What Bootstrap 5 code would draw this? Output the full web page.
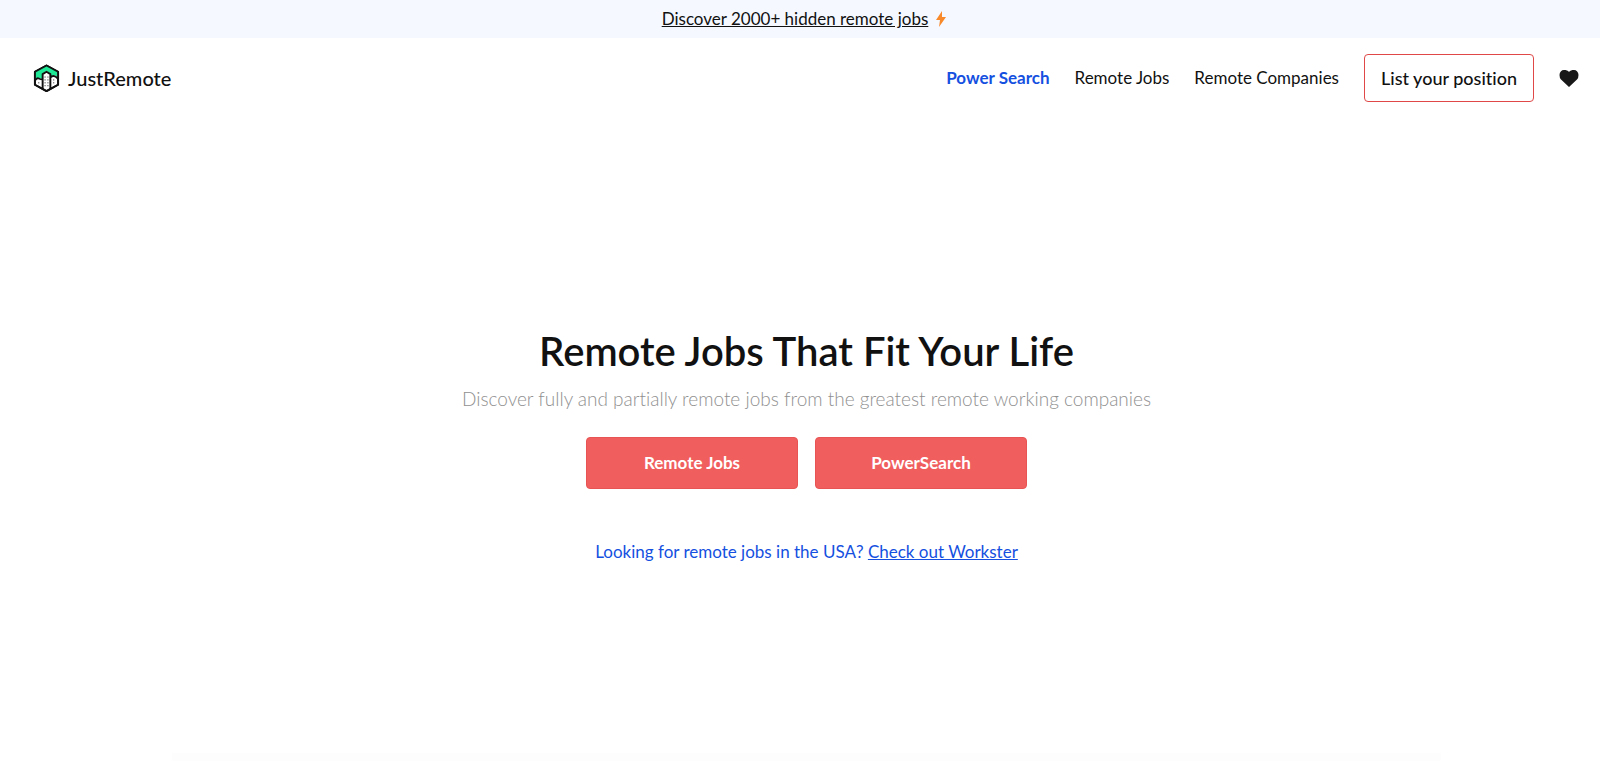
<!DOCTYPE html>
<html lang="en">
<head>
<meta charset="utf-8">
<meta name="viewport" content="width=device-width, initial-scale=1">
<title>JustRemote</title>
<link href="https://cdn.jsdelivr.net/npm/bootstrap@5.3.0/dist/css/bootstrap.min.css" rel="stylesheet">
<style>
  body { font-family: Lato, "Open Sans", sans-serif; font-size: 17px; line-height: 24px; color: #111; background: #fff; font-variant-ligatures: none; }
  .promo { background: #f5f8ff; height: 38px; padding-left: 8px; }
  .promo a, .site-nav a { color: #111; }
  .site-header { padding: 16px 21px 16px 33px; }
  .brand { font-size: 20px; font-weight: 500; color: #111; }
  .site-nav { gap: 25px; }
  .site-nav .power { color: #1550e0; font-weight: 700; }
  .btn-list { --bs-btn-color: #111; --bs-btn-border-color: #e04848; --bs-btn-hover-bg: #f15e5e; --bs-btn-hover-color: #fff; border-radius: 4px; font-size: 18px; font-weight: 500; line-height: 24px; padding: 11px 16px; font-variant-ligatures: none; }
  .hero { padding: 17px 0 0 13px; }
  .hero h1 { font-size: 40px; line-height: 52px; font-weight: 600; }
  .tagline { font-size: 19px; line-height: 28px; font-weight: 300; color: #909090; }
  .cta-row { gap: 17px; }
  .btn-cta { --bs-btn-color: #fff; --bs-btn-bg: #f15e5e; --bs-btn-border-color: #e85454; --bs-btn-hover-color: #fff; --bs-btn-hover-bg: #e04848; width: 212px; height: 52px; border-radius: 4px; font-size: 17px; font-weight: 700; line-height: 38px; }
  .usa { color: #1550e0; margin-top: 51px; }
  .usa a { color: #1550e0; }
  .next-section { padding-left: 13px; }
  .next-panel { width: 80%; height: 8px; background: #fdfdfd; }
</style>
</head>
<body class="d-flex flex-column min-vh-100">
<div class="promo d-flex justify-content-center align-items-center gap-2">
  <a href="#">Discover 2000+ hidden remote jobs</a>
  <svg width="10" height="16" viewBox="0 0 10 16" fill="#f98a2b" aria-hidden="true"><path d="M6 0 0 9h4L3 16l7-10H6z"/></svg>
</div>
<header class="site-header d-flex flex-wrap align-items-center justify-content-between">
  <a class="brand d-flex align-items-center gap-2 text-decoration-none" href="#">
    <svg width="27" height="29" viewBox="0 0 28 30" fill="none" stroke="#111" stroke-width="2" stroke-linejoin="round" aria-hidden="true">
      <path d="M14 1.500 26 8v13.500L14 28 2 21.500V8z" fill="#fff"/>
      <path d="M14 1.500 26 8v7q-1-3-4-3-2 0-4 2V10l-4-3-4 3v6q-2-2-4-1.500T2 17V8z" fill="#1ee896" stroke="none"/>
      <path d="M14 1.500 26 8v13.500L14 28 2 21.500V8z"/>
      <path d="M10 26V10.500L14 8l4 2.500V26M2 17q2-3 4-2t4 1M18 14q2-2 4-1.500t4 3"/>
      <path d="M12.500 13v12M15.500 13v12M21.500 16v6M6 19v3" stroke-width="1" stroke-dasharray="1 2"/>
    </svg>
    <span>JustRemote</span>
  </a>
  <nav class="site-nav d-flex flex-wrap align-items-center" aria-label="Main">
    <a class="power text-decoration-none" href="#">Power Search</a>
    <a class="text-decoration-none" href="#">Remote Jobs</a>
    <a class="text-decoration-none" href="#">Remote Companies</a>
    <button class="btn btn-list" type="button">List your position</button>
    <a class="d-flex" href="#" aria-label="Favourites"><svg width="20" height="18" viewBox="0 0 20 18" fill="#181818" aria-hidden="true"><path d="M10 18 2 10.500Q.500 9 .500 6C.500 3 2.500 1 5 1c2 0 4 .500 5 2 1-1.500 3-2 5-2 2.500 0 4.500 2 4.500 5q0 3-1.500 4.500z"/></svg></a>
  </nav>
</header>
<main class="hero flex-grow-1 d-flex flex-column align-items-center justify-content-center text-center">
  <h1 class="mb-2">Remote Jobs That Fit Your Life</h1>
  <p class="tagline mb-4">Discover fully and partially remote jobs from the greatest remote working companies</p>
  <div class="cta-row d-flex flex-wrap justify-content-center">
    <a class="btn btn-cta" href="#">Remote Jobs</a>
    <a class="btn btn-cta" href="#">PowerSearch</a>
  </div>
  <p class="usa mb-0">Looking for remote jobs in the USA? <a href="#">Check out Workster</a></p>
</main>
<div class="next-section"><div class="next-panel mx-auto"></div></div>
<script src="https://cdn.jsdelivr.net/npm/bootstrap@5.3.0/dist/js/bootstrap.bundle.min.js"></script>
</body>
</html>
